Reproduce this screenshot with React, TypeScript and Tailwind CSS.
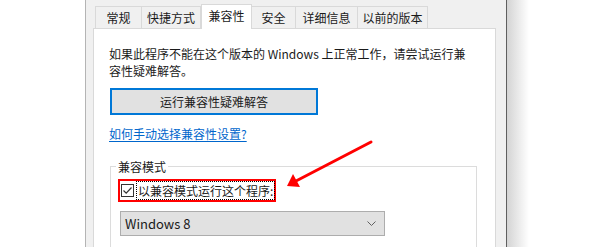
import React from "react";

const TABS = [
  { label: "常规", w: "w-[47px]" },
  { label: "快捷方式", w: "w-[59px]" },
  { label: "兼容性", w: "w-[51px]", active: true },
  { label: "安全", w: "w-[44px]" },
  { label: "详细信息", w: "w-[62px]" },
  { label: "以前的版本", w: "w-[70px]" },
];

function Tab({ label, w, active }: { label: string; w: string; active?: boolean }) {
  if (active) {
    return (
      <div
        className={`${w} relative z-10 -mb-px flex h-[25px] items-center justify-center border border-b-0 border-[#d9d9d9] bg-white pb-[2px]`}
      >
        {label}
      </div>
    );
  }
  return (
    <div
      className={`${w} flex h-[22px] items-center justify-center border border-l-0 border-b-0 border-[#d9d9d9] bg-[#f0f0f0] first:border-l`}
    >
      {label}
    </div>
  );
}

function Arrow() {
  return (
    <svg className="pointer-events-none absolute left-0 top-0" width="600" height="247" aria-hidden>
      <line x1="371" y1="142" x2="296" y2="181" stroke="#ff0000" strokeWidth="3" strokeLinecap="round" />
      <polygon points="287,186 293,174 300,187" fill="#ff0000" />
    </svg>
  );
}

export default function App() {
  return (
    <div
      className="relative flex h-[247px] w-[600px] overflow-hidden bg-white text-[12px] text-[#1a1a1a]"
      style={{ fontFamily: '"Noto Sans CJK SC", "Noto Sans", sans-serif' }}
    >
      <div className="w-[85px] shrink-0" />
      <div className="w-[422px] shrink-0 border-l border-r border-l-[#b4b4b4] border-r-[#5f5f5f] bg-[#f0f0f0]">
        <div className="flex items-end pl-[9px] pt-[4px]">
          {TABS.map((t) => (
            <Tab key={t.label} {...t} />
          ))}
        </div>
        <div className="ml-[7px] h-[300px] w-[403px] border border-[#d9d9d9] bg-white pl-[15px] pt-[16px] leading-[17px]">
          <p>
            <span className="block">如果此程序不能在这个版本的 Windows 上正常工作，请尝试运行兼</span>
            <span className="block">容性疑难解答。</span>
          </p>
          <button
            type="button"
            className="ml-px mt-[9px] flex h-[27px] w-[208px] items-center justify-center border-2 border-[#0078d7] bg-[#e1e1e1]"
          >
            运行兼容性疑难解答
          </button>
          <a className="mt-[10px] inline-block text-[#0066cc] underline underline-offset-2" href="#">
            如何手动选择兼容性设置?
          </a>
          <fieldset className="ml-px mt-[16px] h-[120px] w-[367px] border border-[#dcdcdc] px-[7px]">
            <legend className="-ml-[2px] px-[2px] leading-[17px]">兼容模式</legend>
            <div className="mt-[4px] flex h-[23px] w-[158px] items-center whitespace-nowrap border-2 border-[#ff0000] pl-[1px]">
              <span className="flex h-[13px] w-[13px] shrink-0 items-center justify-center border border-[#333333] bg-white">
                <svg width="11" height="11" viewBox="0 0 11 11" aria-hidden>
                  <path d="M1.5 5.5 L4.2 8.2 L9.5 2.5" fill="none" stroke="#333333" strokeWidth="1.2" />
                </svg>
              </span>
              <span className="ml-[2px] border border-dotted border-[#000] px-px leading-[17px]">
                以兼容模式运行这个程序:
              </span>
            </div>
            <div className="ml-[2px] mt-[9px] flex h-[25px] w-[265px] items-center justify-between border border-[#adadad] bg-[#e1e1e1] pl-[4px] pr-[8px] text-[13px]">
              <span>Windows 8</span>
              <svg width="9" height="5" viewBox="0 0 9 5" aria-hidden>
                <path d="M0.5 0.5 L4.5 4.5 L8.5 0.5" fill="none" stroke="#606060" strokeWidth="1" />
              </svg>
            </div>
          </fieldset>
        </div>
      </div>
      <div className="w-[22px] shrink-0 bg-gradient-to-r from-[#d4d4d4] to-white" />
      <Arrow />
    </div>
  );
}
